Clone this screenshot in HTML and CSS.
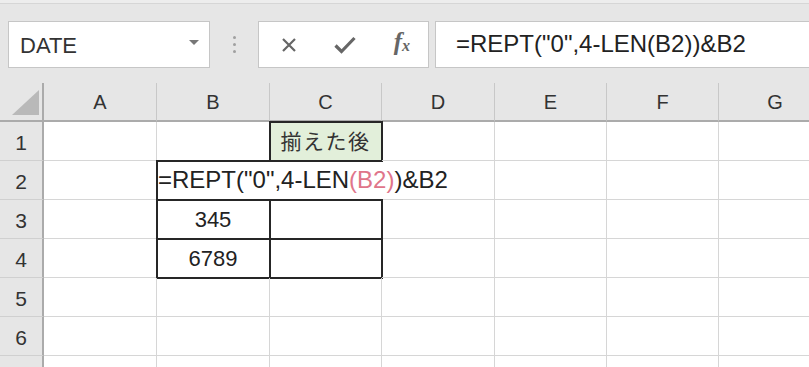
FILE: index.html
```html
<!DOCTYPE html>
<html lang="ja">

<head>
    <meta charset="UTF-8">
    <title>REPT</title>
    <link rel="stylesheet" href="styles.css">
</head>

<body>
    <div class="toolbar">
        <div class="namebox">
            <span>DATE</span>
            <svg class="caret" width="10" height="5" viewBox="0 0 10 5"><path d="M0 0h10L5 5z" fill="#777"/></svg>
        </div>
        <div class="grip"><i></i><i></i><i></i></div>
        <div class="fbtns">
            <svg width="16" height="16" viewBox="0 0 16 16"><path d="M2 2l12 12M14 2L2 14" stroke="#666" stroke-width="2.2" fill="none"/></svg>
            <svg width="22" height="18" viewBox="0 0 22 18"><path d="M1.5 9.5l6 6L20.5 2" stroke="#666" stroke-width="3.2" fill="none"/></svg>
            <span class="fx"><i>f</i><sub>x</sub></span>
        </div>
        <div class="fbar">=REPT("0",4-LEN(B2))&amp;B2</div>
    </div>

    <div class="sheet">
        <div class="corner"><svg width="27" height="25" viewBox="0 0 27 25"><path d="M27 0V25H0z" fill="#b9b9b9"/></svg></div>
        <div class="h">A</div>
        <div class="h">B</div>
        <div class="h">C</div>
        <div class="h">D</div>
        <div class="h">E</div>
        <div class="h">F</div>
        <div class="h">G</div>

        <div class="r">1</div>
        <div class="c"></div>
        <div class="c"></div>
        <div class="c box head">揃えた後</div>
        <div class="c"></div>
        <div class="c"></div>
        <div class="c"></div>
        <div class="c"></div>

        <div class="r">2</div>
        <div class="c"></div>
        <div class="c b2 open">=REPT("0",4-LEN<span class="ref">(B2)</span>)&amp;B2</div>
        <div class="c open"></div>
        <div class="c"></div>
        <div class="c"></div>
        <div class="c"></div>
        <div class="c"></div>

        <div class="r">3</div>
        <div class="c"></div>
        <div class="c box num">345</div>
        <div class="c box"></div>
        <div class="c"></div>
        <div class="c"></div>
        <div class="c"></div>
        <div class="c"></div>

        <div class="r">4</div>
        <div class="c"></div>
        <div class="c box num">6789</div>
        <div class="c box"></div>
        <div class="c"></div>
        <div class="c"></div>
        <div class="c"></div>
        <div class="c"></div>

        <div class="r">5</div>
        <div class="c"></div>
        <div class="c"></div>
        <div class="c"></div>
        <div class="c"></div>
        <div class="c"></div>
        <div class="c"></div>
        <div class="c"></div>

        <div class="r">6</div>
        <div class="c"></div>
        <div class="c"></div>
        <div class="c"></div>
        <div class="c"></div>
        <div class="c"></div>
        <div class="c"></div>
        <div class="c"></div>

        <div class="r"></div>
        <div class="c"></div>
        <div class="c"></div>
        <div class="c"></div>
        <div class="c"></div>
        <div class="c"></div>
        <div class="c"></div>
        <div class="c"></div>
    </div>
</body>

</html>
```

FILE: styles.css
```css
body {
    margin: 0;
    width: 809px;
    height: 367px;
    overflow: hidden;
    background-color: #fff;
    font-family: "Liberation Sans", Arial, sans-serif;
    color: #222;
}

/* formula bar area */
.toolbar {
    display: flex;
    align-items: flex-start;
    height: 83px;
    box-sizing: border-box;
    padding-top: 21px;
    background: linear-gradient(#ededed 0 3px, #d6d6d6 3px 4px, #e6e6e6 4px);
}

.namebox {
    display: flex;
    align-items: center;
    justify-content: space-between;
    width: 202px;
    height: 47px;
    box-sizing: border-box;
    margin-left: 8px;
    padding: 2px 10px 0 11px;
    background-color: #fff;
    border: 1px solid #c6c6c6;
    font-size: 22px;
    color: #333;
}

.caret {
    margin-top: -6px;
}

.grip {
    display: flex;
    flex-direction: column;
    align-items: center;
    gap: 4px;
    width: 48px;
    padding-top: 15px;
}

.grip i {
    width: 3px;
    height: 3px;
    border-radius: 50%;
    background-color: #a0a0a0;
}

.fbtns {
    display: flex;
    align-items: center;
    justify-content: space-between;
    width: 171px;
    height: 47px;
    box-sizing: border-box;
    padding: 0 18px 0 22px;
    background-color: #fff;
    border: 1px solid #c6c6c6;
}

.fx {
    font-family: "Liberation Serif", serif;
    font-weight: bold;
    color: #666;
    font-size: 25px;
    margin-top: -6px;
}

.fx sub {
    font-size: 16px;
    font-style: italic;
    vertical-align: -1px;
    margin-left: 0;
}

.fbar {
    flex: 1;
    height: 47px;
    box-sizing: border-box;
    margin-left: 6px;
    margin-right: -10px;
    padding: 8px 0 0 20px;
    background-color: #fff;
    border: 1px solid #c6c6c6;
    font-size: 24px;
    color: #222;
    white-space: nowrap;
}

/* worksheet grid */
.sheet {
    display: grid;
    grid-template-columns: 44px 113px 113px 112px 113px 112px 112px 113px;
    grid-auto-rows: 39px;
}

.sheet > div {
    box-sizing: border-box;
    display: flex;
    align-items: center;
    justify-content: center;
    white-space: nowrap;
}

.corner {
    background-color: #e6e6e6;
    border-right: 2px solid #ababab;
    border-bottom: 2px solid #ababab;
    justify-content: flex-end !important;
    align-items: flex-end !important;
    padding: 0 3px 5px 0;
}

.h {
    background-color: #e6e6e6;
    border-right: 1px solid #c8c8c8;
    border-bottom: 2px solid #ababab;
    font-size: 20px;
    color: #333;
    padding-top: 1px;
}

.r {
    background-color: #e6e6e6;
    border-right: 2px solid #ababab;
    border-bottom: 1px solid #d0d0d0;
    font-size: 21px;
    color: #333;
    padding-top: 3px;
}

.c {
    border-right: 1px solid #d6d6d6;
    border-bottom: 1px solid #d6d6d6;
}

.c.open {
    border-right-color: transparent;
}

.box {
    outline: 2px solid #262626;
    outline-offset: -1px;
}

.head {
    background-color: #e2efda;
    font-family: "Noto Sans CJK JP", sans-serif;
    font-size: 21px;
    letter-spacing: 1.5px;
    color: #333;
    padding-bottom: 3px;
}

.num {
    font-size: 22px;
    padding-top: 2px;
}

.b2 {
    justify-content: flex-start !important;
    padding-left: 1px;
    font-size: 24px;
    box-shadow: inset 1px 1px 0 #262626, -1px -1px 0 #262626;
}

.ref {
    color: #e0758a;
}
```
